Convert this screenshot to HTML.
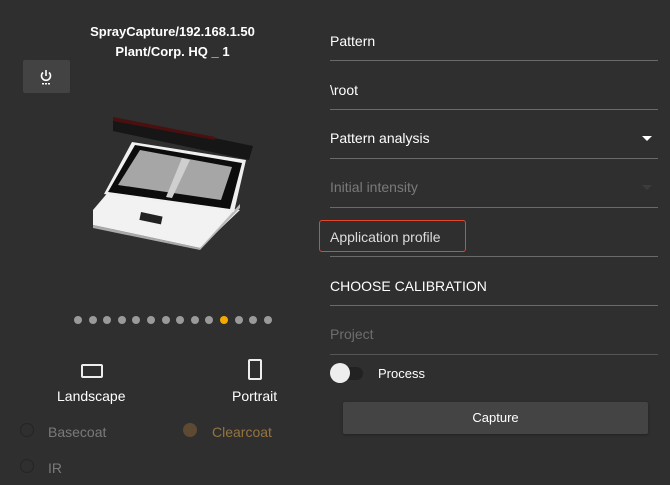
<!DOCTYPE html>
<html><head><style>
body{margin:0;width:670px;height:485px;background:#2f2f2f;font-family:"Liberation Sans",sans-serif;position:relative;overflow:hidden;color:#fff}
.a{position:absolute}
.t{font-size:14px;left:330px}
.ln{position:absolute;left:330px;width:328px;height:1px;background:#6a6a6a}
.dot{position:absolute;top:316px;width:8px;height:8px;border-radius:50%;background:#9a9a9a}
</style></head><body>
<div class="a" style="left:0;width:345px;top:22px;text-align:center;font-size:13px;font-weight:bold;line-height:20px">SprayCapture/192.168.1.50<br>Plant/Corp. HQ _ 1</div>
<div class="a" style="left:23px;top:60px;width:47px;height:33px;background:#434343;border-radius:2px"></div>
<svg class="a" style="left:38px;top:68px" width="16" height="18" viewBox="0 0 16 18"><path d="M5 4.5A4.5 4.5 0 1 0 11 4.5M8 2V8" stroke="#fff" stroke-width="1.6" fill="none"/><rect x="4" y="15" width="2" height="1.5" fill="#fff"/><rect x="7" y="15" width="2" height="1.5" fill="#fff"/><rect x="10" y="15" width="2" height="1.5" fill="#fff"/></svg>
<svg class="a" style="left:90px;top:115px" width="170" height="135" viewBox="90 115 170 135">
<polygon points="113,117 253,146 249,160 113,131" fill="#161616"/>
<polygon points="113,117 215,137 215,140 113,121" fill="#4a1010"/>
<polygon points="93,210 110,190 240,210 200,248 93,225" fill="#f2f2f2"/>
<polygon points="93,225 200,248 200,250 93,228" fill="#aaa"/>
<polygon points="200,248 240,204 240,208 200,250" fill="#bbb"/>
<polygon points="132,142 246,160 234,212 104,194" fill="#f0f0f0"/>
<polygon points="135,145 242,163 230,209 108,192" fill="#0c0c0c"/>
<polygon points="140,150 232,167 221,200 118,185" fill="#a6a6a6"/>
<polygon points="182,158 190,160 172,198 166,197" fill="#cfcfcf"/>
<rect x="140" y="214" width="22" height="8" fill="#222" transform="rotate(12 150 218)"/>
</svg>
<div class="dot" style="left:74px"></div><div class="dot" style="left:89px"></div><div class="dot" style="left:103px"></div><div class="dot" style="left:118px"></div><div class="dot" style="left:132px"></div><div class="dot" style="left:147px"></div><div class="dot" style="left:162px"></div><div class="dot" style="left:176px"></div><div class="dot" style="left:191px"></div><div class="dot" style="left:205px"></div><div class="dot" style="left:220px;background:#f5a800"></div><div class="dot" style="left:235px"></div><div class="dot" style="left:249px"></div><div class="dot" style="left:264px"></div>
<div class="a" style="left:81px;top:364px;width:18px;height:10px;border:2px solid #eee;border-radius:2px"></div>
<div class="a" style="left:248px;top:359px;width:10px;height:17px;border:2px solid #eee;border-radius:2px"></div>
<div class="a" style="left:57px;top:388px;font-size:14px">Landscape</div>
<div class="a" style="left:232px;top:388px;font-size:14px">Portrait</div>
<div class="a" style="left:20px;top:423px;width:12px;height:12px;border:1px solid #252525;border-radius:50%"></div>
<div class="a" style="left:48px;top:424px;font-size:14px;color:#7a7a7a">Basecoat</div>
<div class="a" style="left:183px;top:423px;width:14px;height:14px;background:#5e4a33;border-radius:50%"></div>
<div class="a" style="left:212px;top:424px;font-size:14px;color:#95743e">Clearcoat</div>
<div class="a" style="left:20px;top:459px;width:12px;height:12px;border:1px solid #252525;border-radius:50%"></div>
<div class="a" style="left:48px;top:460px;font-size:14px;color:#7a7a7a">IR</div>
<div class="a t" style="top:33px">Pattern</div><div class="ln" style="top:60px"></div>
<div class="a t" style="top:82px">\root</div><div class="ln" style="top:109px"></div>
<div class="a t" style="top:130px">Pattern analysis</div><div class="ln" style="top:158px"></div>
<div class="a" style="left:642px;top:136px;border:5px solid transparent;border-top:5px solid #fff"></div>
<div class="a t" style="top:179px;color:#7a7a7a">Initial intensity</div><div class="ln" style="top:207px"></div>
<div class="a" style="left:642px;top:185px;border:5px solid transparent;border-top:5px solid #3c3c3c"></div>
<div class="a" style="left:319px;top:220px;width:145px;height:30px;border:1.5px solid #e4452b;border-radius:3px"></div>
<div class="a t" style="top:229px;color:#ddd">Application profile</div><div class="ln" style="top:256px"></div>
<div class="a t" style="top:278px">CHOOSE CALIBRATION</div><div class="ln" style="top:305px"></div>
<div class="a t" style="top:326px;color:#6e6e6e">Project</div><div class="ln" style="top:354px;background:#555"></div>
<div class="a" style="left:333px;top:367px;width:30px;height:13px;border-radius:7px;background:#222"></div>
<div class="a" style="left:330px;top:363px;width:20px;height:20px;border-radius:50%;background:#eee"></div>
<div class="a" style="left:378px;top:366px;font-size:13px">Process</div>
<div class="a" style="left:343px;top:402px;width:305px;height:32px;background:#444;border-radius:2px;box-shadow:0 1px 2px #222;text-align:center;line-height:32px;font-size:13px">Capture</div>
</body></html>
